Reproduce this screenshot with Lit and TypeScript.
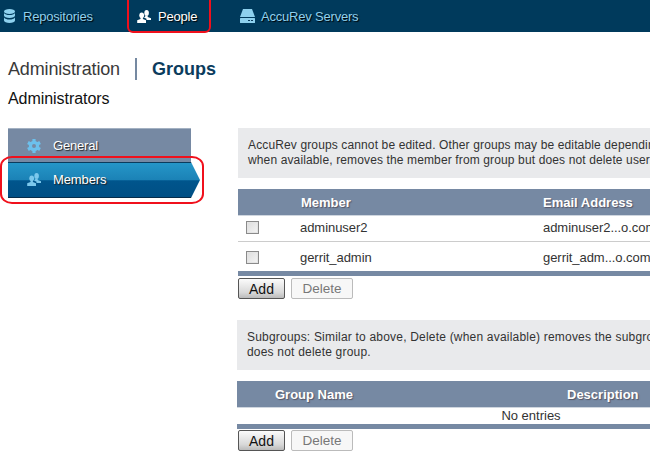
import { LitElement, html, css, svg } from "lit";
import { customElement } from "lit/decorators.js";

const peopleIcon = (c: string) => svg`<svg class="ico" width="14" height="13" viewBox="0 0 14 13"><g fill="${c}"><ellipse cx="9.600" cy="2.900" rx="2.300" ry="2.900"/><path d="M8.500 5.500h2.200v1.500L14 8.300V10H9.500V8.700L7 7.500c.8-.5 1.300-1 1.500-2z"/><ellipse cx="4.700" cy="5.300" rx="2.400" ry="2.900"/><path d="M3.500 7.800h2.400v1.200L9 10.200V13H.2v-2.800L3.500 9z"/></g></svg>`;

const gear = svg`<svg class="ico" width="14" height="14" viewBox="0 0 14 14"><g fill="#6cc0ec"><path fill-rule="evenodd" d="M7 1.800a5.200 5.200 0 1 1 0 10.400A5.200 5.200 0 0 1 7 1.800zM7 5a2 2 0 1 0 0 4 2 2 0 0 0 0-4z"/><rect x="5.400" y="0" width="3.200" height="3"/><rect x="5.400" y="11" width="3.200" height="3"/><rect x="5.400" y="0" width="3.200" height="3" transform="rotate(60 7 7)"/><rect x="5.400" y="11" width="3.200" height="3" transform="rotate(60 7 7)"/><rect x="5.400" y="0" width="3.200" height="3" transform="rotate(120 7 7)"/><rect x="5.400" y="11" width="3.200" height="3" transform="rotate(120 7 7)"/></g></svg>`;

@customElement("app-root")
export class AppRoot extends LitElement {
  static styles = css`
    :host { display: block; width: 650px; height: 454px; overflow: hidden; position: relative; background: #fff; font-family: "Liberation Sans", Arial, sans-serif; color: #333; }
    .nav { height: 32px; background: #003a5c; display: flex; align-items: center; font-size: 13px; letter-spacing: -0.2px; }
    .nav-item { display: flex; align-items: center; color: #8ed1ee; text-shadow: 1px 1px 1px #000; white-space: nowrap; }
    .nav-item.repo { margin-left: 4px; width: 133px; gap: 8px; }
    .nav-item.people { width: 103px; gap: 7px; color: #fff; }
    .nav-item.servers { gap: 6px; }
    .ico { display: block; flex: none; }
    .title { display: flex; align-items: center; height: 22px; margin: 26px 0 0 8px; font-size: 18px; color: #3a3a3a; }
    .title .adm { width: 127px; letter-spacing: -0.15px; }
    .title .sep { width: 2px; height: 22px; background: #7589a1; margin-right: 15px; }
    .title .grp { font-weight: bold; color: #0b3c5d; }
    .sub { margin: 10px 0 0 8px; font-size: 16px; line-height: 18px; color: #111; height: 18px; letter-spacing: -0.05px; }
    .main { display: flex; margin-top: 20px; align-items: flex-start; }
    .side { width: 192px; margin-left: 8px; flex: none; }
    .side-item { display: flex; align-items: center; width: 183px; color: #fff; font-size: 13px; letter-spacing: -0.1px; text-shadow: 1px 1px 1px #222; box-sizing: border-box; padding-left: 19px; gap: 12px; }
    .side-item.gen { height: 34px; background: #7689a3; border-top: 1px solid #a3b1c2; }
    .side-item.gen span { letter-spacing: -0.2px; }
    .side-item.mem { height: 36px; width: 192px; padding-bottom: 2px; background: linear-gradient(#2596c8 0%, #1b82b6 50%, #00558c 52%, #004f85 100%); border-top: 1px solid #0b3c5d; border-bottom: 1px solid #062c4a; clip-path: polygon(0 0, 183px 0, 192px 50%, 183px 100%, 0 100%); }
    .content { margin-left: 38px; width: 600px; flex: none; }
    .info { background: #e9eaec; font-size: 12px; line-height: 15px; padding: 10px; height: 50px; box-sizing: border-box; white-space: nowrap; color: #333; letter-spacing: 0.13px; }
    .tbl-head { display: flex; height: 26px; align-items: center; margin-top: 11px; background: #7689a3; color: #fff; font-weight: bold; font-size: 13px; text-shadow: 1px 1px 1px #556; border-bottom: 1px solid #cfd6df; box-sizing: content-box; }
    .tbl-head .c1 { padding-left: 1px; box-sizing: border-box; }
    .row { display: flex; align-items: center; font-size: 13px; letter-spacing: -0.05px; color: #333; box-sizing: border-box; }
    .row.a { height: 26px; border-bottom: 1px solid #ccc; padding-bottom: 2px; }
    .row.b { height: 29px; padding-top: 1px; }
    .c0 { width: 62px; flex: none; }
    .c1 { width: 243px; flex: none; }
    .cb { display: block; width: 11px; height: 11px; margin-left: 8px; border: 1px solid #8a8a8a; background: linear-gradient(135deg, #ddd, #f4f4f4); box-shadow: inset 0 0 0 1px #e4e4e4; }
    .bar { height: 5px; background: #7689a3; }
    .btns { display: flex; gap: 6px; margin-top: 2px; }
    .btn { width: 47px; height: 21px; box-sizing: border-box; border-radius: 2px; display: flex; align-items: center; justify-content: center; font-size: 14px; }
    .btn.add { color: #111; border: 1px solid #555; background: linear-gradient(#fbfbfb, #d9d9d9 70%, #bbb); }
    .btn.del { width: 62px; color: #777; border: 1px solid #bbb; background: #f7f7f7; font-size: 13.500px; }
    .second { margin-top: 21px; margin-left: -1px; width: 600px; }
    .second .info { letter-spacing: 0.2px; }
    .second .btns { margin: 1px 0 0 1px; }
    .g-name { width: 330px; flex: none; padding-left: 38px; box-sizing: border-box; }
    .empty { height: 16px; width: 588px; text-align: center; font-size: 13px; line-height: 16px; color: #333; }
    .second .tbl-head { margin-top: 11px; }
    .mark { position: absolute; border: 2px solid #f0101c; box-sizing: border-box; pointer-events: none; }
    .mark.m1 { left: 127px; top: -6px; width: 84px; height: 39px; border-radius: 6px; }
    .mark.m2 { left: 0; top: 156px; width: 204px; height: 48px; border-radius: 12px / 10px; }
  `;

  render() {
    return html`
      <div class="nav">
        <div class="nav-item repo">
          <svg class="ico" width="11" height="14" viewBox="0 0 11 14"><g fill="#8ed1ee"><ellipse cx="5.500" cy="2.500" rx="5.500" ry="2.500"/><path d="M0 4c1 1.500 3 2 5.500 2S10 5.500 11 4v2.500C11 8 8.500 9 5.500 9S0 8 0 6.500z"/><path d="M0 8.500C1 10 3 10.500 5.500 10.500S10 10 11 8.500V11.500C11 13 8.500 14 5.500 14S0 13 0 11.500z"/></g></svg>
          <span>Repositories</span>
        </div>
        <div class="nav-item people">${peopleIcon("#fff")}<span>People</span></div>
        <div class="nav-item servers">
          <svg class="ico" width="15" height="14" viewBox="0 0 15 14"><path fill="#8ed1ee" d="M3 0h9l3 8H0z"/><rect y="9" width="15" height="5" rx=".5" fill="#8ed1ee"/><rect x="8" y="11" width="2" height="1" fill="#0b3c5d"/><rect x="11" y="11" width="2" height="1" fill="#0b3c5d"/></svg>
          <span>AccuRev Servers</span>
        </div>
      </div>
      <div class="title"><span class="adm">Administration</span><span class="sep"></span><span class="grp">Groups</span></div>
      <div class="sub">Administrators</div>
      <div class="main">
        <div class="side">
          <div class="side-item gen">${gear}<span>General</span></div>
          <div class="side-item mem">${peopleIcon("#7cc8ec")}<span>Members</span></div>
        </div>
        <div class="content">
          <div class="info">AccuRev groups cannot be edited. Other groups may be editable depending on the type of group. Delete,<br>when available, removes the member from group but does not delete user.</div>
          <div class="tbl-head"><span class="c0"></span><span class="c1">Member</span><span>Email Address</span></div>
          <div class="row a"><span class="c0"><span class="cb"></span></span><span class="c1">adminuser2</span><span>adminuser2...o.com</span></div>
          <div class="row b"><span class="c0"><span class="cb"></span></span><span class="c1">gerrit_admin</span><span>gerrit_adm...o.com</span></div>
          <div class="bar"></div>
          <div class="btns"><span class="btn add">Add</span><span class="btn del">Delete</span></div>
          <div class="second">
            <div class="info">Subgroups: Similar to above, Delete (when available) removes the subgroup from this group but<br>does not delete group.</div>
            <div class="tbl-head"><span class="g-name">Group Name</span><span>Description</span></div>
            <div class="empty">No entries</div>
            <div class="bar"></div>
            <div class="btns"><span class="btn add">Add</span><span class="btn del">Delete</span></div>
          </div>
        </div>
      </div>
      <div class="mark m1"></div>
      <div class="mark m2"></div>
    `;
  }
}
